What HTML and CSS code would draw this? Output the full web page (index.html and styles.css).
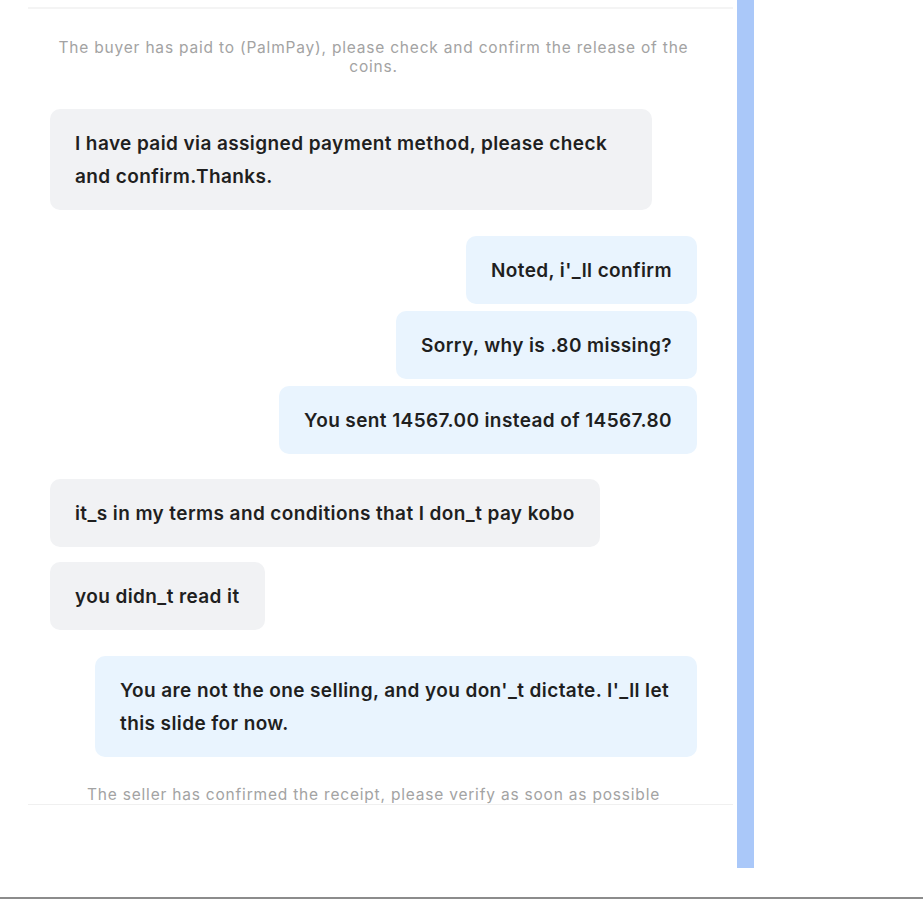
FILE: index.html
```html
<!DOCTYPE html>
<html lang="en">
<head>
  <meta charset="UTF-8" />
  <meta name="viewport" content="width=device-width, initial-scale=1.0" />
  <title>Order chat</title>
  <link rel="stylesheet" href="styles.css">
</head>
<body>
  <div class="page">
    <main class="chat">
      <div class="messages">
        <p class="notice notice-top">The buyer has paid to (PalmPay), please check and confirm the release of the coins.</p>

        <div class="msg in first">I have paid via assigned payment method, please check and confirm.Thanks.</div>

        <div class="msg out">Noted, i'_ll confirm</div>
        <div class="msg out cont">Sorry, why is .80 missing?</div>
        <div class="msg out cont">You sent 14567.00 instead of 14567.80</div>

        <div class="msg in">it_s in my terms and conditions that I don_t pay kobo</div>
        <div class="msg in cont">you didn_t read it</div>

        <div class="msg out wide">You are not the one selling, and you don'_t dictate. I'_ll let this slide for now.</div>

        <p class="notice notice-bottom">The seller has confirmed the receipt, please verify as soon as possible</p>
      </div>
      <div class="composer"></div>
    </main>
    <div class="scrollbar"></div>
  </div>
</body>
</html>
```

FILE: styles.css
```css
* {
  box-sizing: border-box;
}
body {
  margin: 0;
  font-family: 'Inter', 'Noto Sans', sans-serif;
  background: #ffffff;
  color: #1f1f1f;
}
.page {
  display: flex;
  align-items: flex-start;
  height: 899px;
  border-bottom: 2px solid #8c8c8c;
}
.chat {
  width: 705px;
  margin-left: 28px;
  margin-top: 7px;
  border-top: 2px solid #f4f4f4;
}
.messages {
  display: flex;
  flex-direction: column;
  padding: 0 36px 0 22px;
}
.notice {
  margin: 0;
  text-align: center;
  font-size: 15.5px;
  line-height: 19px;
  letter-spacing: 0.8px;
  color: #a3a3a3;
}
.notice-top {
  margin-top: 29px;
  padding: 0 2px;
}
.notice-bottom {
  margin-top: 28px;
}
.msg {
  max-width: 602px;
  padding: 18px 25px 17px;
  border-radius: 10px;
  font-size: 19px;
  font-weight: 600;
  line-height: 33px;
  letter-spacing: 0.4px;
  margin-top: 25px;
}
.msg.in {
  align-self: flex-start;
  background: #f1f2f4;
}
.msg.out {
  align-self: flex-end;
  background: #e9f4fe;
}
.msg.first {
  margin-top: 33px;
}
.msg.first + .msg.out {
  margin-top: 26px;
}
.msg.out.cont {
  margin-top: 7px;
}
.msg.in.cont {
  margin-top: 15px;
}
.msg.wide {
  width: 602px;
  padding-right: 18px;
  margin-top: 26px;
}
.composer {
  border-top: 1px solid #f0f0f0;
  height: 60px;
}
.scrollbar {
  width: 17px;
  height: 868px;
  margin-left: 4px;
  background: #aac8f9;
}
```
